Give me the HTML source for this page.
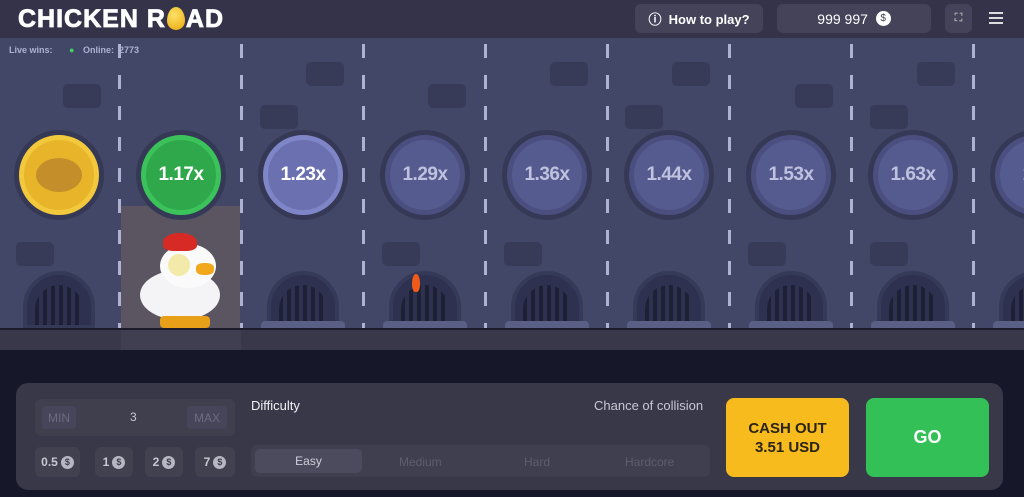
<!DOCTYPE html>
<html><head><meta charset="utf-8"><style>
*{margin:0;padding:0;box-sizing:border-box}
body{width:1024px;height:497px;overflow:hidden;background:#17172a;font-family:"Liberation Sans",sans-serif;position:relative}
.hdr{position:absolute;left:0;top:0;width:1024px;height:38px;background:#353349}
.logo{position:absolute;left:18px;top:5px;color:#fff;font-weight:900;font-size:25px;letter-spacing:1px;-webkit-text-stroke:0.8px #fff}
.egg{display:inline-block;width:18px;height:23px;background:radial-gradient(circle at 40% 35%,#ffe066,#e9a90c);border-radius:50% 50% 50% 50%/60% 60% 40% 40%;vertical-align:-3px;margin:0 1px}
.btn{position:absolute;background:#45435a;border-radius:6px;color:#fff;font-size:13px;font-weight:bold;display:flex;align-items:center;justify-content:center}
.game{position:absolute;left:0;top:38px;width:1024px;height:292px;background:#424767;overflow:hidden}
.div{position:absolute;top:6px;width:3px;height:290px;background:repeating-linear-gradient(#aeb2d2 0 14px,transparent 14px 31px)}
.brick{position:absolute;width:38px;height:24px;border-radius:5px;background:#373b57}
.coin{position:absolute;width:90px;height:90px;border-radius:50%;background:#353955;display:flex;align-items:center;justify-content:center;top:92px}
.coin i{display:flex;width:80px;height:80px;border-radius:50%;background:#555b8f;border:5px solid #4a4f80;align-items:center;justify-content:center;color:#bfc2de;font-style:normal;font-weight:bold;font-size:19px;letter-spacing:-0.5px}
.sewer{position:absolute;top:233px;width:72px;height:58px;border-radius:36px 36px 0 0;background:#2e3250;border:4px solid #353a59}
.sewer:after{content:"";position:absolute;left:8px;right:8px;top:10px;bottom:0;background:repeating-linear-gradient(90deg,#1e2136 0 4px,#2e3250 4px 8px);border-radius:26px 26px 0 0}
.slab{position:absolute;top:283px;width:84px;height:8px;border-radius:4px 4px 0 0;background:#5a5f86}
.road{position:absolute;left:0;top:328px;width:1024px;height:22px;background:#39384a;border-top:2px solid #1c1c2a}
.panel{position:absolute;left:16px;top:383px;width:987px;height:107px;background:#393849;border-radius:12px}
.chip{position:absolute;top:447px;height:30px;background:#42414f;border-radius:6px;color:#c8c7d3;font-size:12px;font-weight:bold;display:flex;align-items:center;justify-content:center;gap:3px}
.s{display:inline-flex;width:13px;height:13px;border-radius:50%;background:#b7b6c2;color:#3d3c4c;font-size:9px;align-items:center;justify-content:center}
</style></head><body>
<div class="hdr">
<div class="logo">CHICKEN R<span class="egg"></span>AD</div>
<div class="btn" style="left:635px;top:4px;width:128px;height:29px">ⓘ&nbsp; How to play?</div>
<div class="btn" style="left:777px;top:4px;width:154px;height:29px;font-weight:normal;font-size:14px">999 997&nbsp;&nbsp;<span class="s" style="width:15px;height:15px;background:#fff;font-size:10px">$</span></div>
<div class="btn" style="left:945px;top:4px;width:27px;height:29px;font-size:11px;color:#aaa">⛶</div>
<div style="position:absolute;left:989px;top:12px;width:14px;height:2px;background:#ddd;box-shadow:0 5px #ddd,0 10px #ddd"></div>
</div>
<div class="game">
<div style="position:absolute;left:9px;top:7px;font-size:9px;font-weight:bold;color:#aeb1d0">Live wins: <span style="color:#3fd160;margin:0 6px 0 14px">●</span> Online: &nbsp;2773</div>
<div class="div" style="left:118px"></div><div class="div" style="left:240px"></div><div class="div" style="left:362px"></div><div class="div" style="left:484px"></div><div class="div" style="left:606px"></div><div class="div" style="left:728px"></div><div class="div" style="left:850px"></div><div class="div" style="left:972px"></div>
<div class="brick" style="left:63px;top:46px"></div><div class="brick" style="left:306px;top:24px"></div><div class="brick" style="left:260px;top:67px"></div><div class="brick" style="left:428px;top:46px"></div><div class="brick" style="left:550px;top:24px"></div><div class="brick" style="left:625px;top:67px"></div><div class="brick" style="left:672px;top:24px"></div><div class="brick" style="left:795px;top:46px"></div><div class="brick" style="left:917px;top:24px"></div><div class="brick" style="left:870px;top:67px"></div>
<div class="brick" style="left:16px;top:204px"></div><div class="brick" style="left:382px;top:204px"></div><div class="brick" style="left:504px;top:204px"></div><div class="brick" style="left:870px;top:204px"></div><div class="brick" style="left:748px;top:204px"></div>
<div style="position:absolute;left:121px;top:168px;width:119px;height:124px;background:#5a5560"></div>
<div class="coin" style="left:14px"><i style="background:#e8b52a;border-color:#f2c93c"><span style="width:46px;height:34px;border-radius:50%;background:#c48f2a;display:block"></span></i></div>
<div class="coin" style="left:136px"><i style="background:#2ea84a;border-color:#3cc25a;color:#fff">1.17x</i></div>
<div class="coin" style="left:258px"><i style="background:#6a70b0;border-color:#7f86c8;color:#fff">1.23x</i></div>
<div class="coin" style="left:380px"><i>1.29x</i></div>
<div class="coin" style="left:502px"><i>1.36x</i></div>
<div class="coin" style="left:624px"><i>1.44x</i></div>
<div class="coin" style="left:746px"><i>1.53x</i></div>
<div class="coin" style="left:868px"><i>1.63x</i></div>
<div class="coin" style="left:990px"><i>1.7</i></div>
<div class="sewer" style="left:23px"></div><div class="sewer" style="left:267px"></div><div class="sewer" style="left:389px"></div><div class="sewer" style="left:511px"></div><div class="sewer" style="left:633px"></div><div class="sewer" style="left:755px"></div><div class="sewer" style="left:877px"></div><div class="sewer" style="left:999px"></div>
<div class="slab" style="left:261px"></div><div class="slab" style="left:383px"></div><div class="slab" style="left:505px"></div><div class="slab" style="left:627px"></div><div class="slab" style="left:749px"></div><div class="slab" style="left:871px"></div><div class="slab" style="left:993px"></div>
<div style="position:absolute;left:412px;top:236px;width:8px;height:18px;background:#f05a1a;border-radius:50% 50% 40% 40%"></div>
<div style="position:absolute;left:140px;top:232px;width:80px;height:50px;border-radius:50%;background:#f4f4f6"></div>
<div style="position:absolute;left:160px;top:206px;width:56px;height:44px;border-radius:50%;background:#fafafa"></div>
<div style="position:absolute;left:163px;top:195px;width:34px;height:18px;border-radius:50% 50% 30% 30%;background:#d82a24"></div>
<div style="position:absolute;left:168px;top:216px;width:22px;height:22px;border-radius:50%;background:#f3e9a8"></div>
<div style="position:absolute;left:196px;top:225px;width:18px;height:12px;border-radius:40%;background:#f1a81c"></div>
<div style="position:absolute;left:160px;top:278px;width:50px;height:12px;background:#e8a018;border-radius:4px"></div>
</div>
<div class="road"><div style="position:absolute;left:121px;width:120px;height:20px;background:#403f52"></div></div>
<div class="panel"></div>
<div style="position:absolute;left:35px;top:399px;width:200px;height:37px;background:#403f4e;border-radius:6px"></div>
<div style="position:absolute;left:42px;top:406px;width:34px;height:23px;background:#46455a;border-radius:4px;color:#6d6b80;font-size:12px;display:flex;align-items:center;justify-content:center">MIN</div>
<div style="position:absolute;left:130px;top:410px;color:#c8c7d3;font-size:12px">3</div>
<div style="position:absolute;left:187px;top:406px;width:40px;height:23px;background:#46455a;border-radius:4px;color:#6d6b80;font-size:12px;display:flex;align-items:center;justify-content:center">MAX</div>
<div class="chip" style="left:35px;width:45px">0.5<span class="s">$</span></div>
<div class="chip" style="left:95px;width:38px">1<span class="s">$</span></div>
<div class="chip" style="left:145px;width:38px">2<span class="s">$</span></div>
<div class="chip" style="left:195px;width:40px">7<span class="s">$</span></div>
<div style="position:absolute;left:251px;top:398px;color:#f0f0f4;font-size:13px">Difficulty</div>
<div style="position:absolute;left:594px;top:398px;color:#c8c7d3;font-size:13px">Chance of collision</div>
<div style="position:absolute;left:251px;top:445px;width:459px;height:32px;background:#403f4f;border-radius:6px;font-size:12px;color:#5e5d70">
<div style="position:absolute;left:4px;top:4px;width:107px;height:24px;background:#4c4b5d;border-radius:5px;color:#d0cfda;display:flex;align-items:center;justify-content:center">Easy</div>
<span style="position:absolute;left:148px;top:10px">Medium</span><span style="position:absolute;left:273px;top:10px">Hard</span><span style="position:absolute;left:374px;top:10px">Hardcore</span></div>
<div style="position:absolute;left:726px;top:398px;width:123px;height:79px;background:#f7bb1d;border-radius:8px;color:#2a2418;font-weight:bold;font-size:15px;display:flex;align-items:center;justify-content:center;text-align:center;line-height:19px">CASH OUT<br>3.51 USD</div>
<div style="position:absolute;left:866px;top:398px;width:123px;height:79px;background:#33c157;border-radius:8px;color:#fff;font-weight:bold;font-size:18px;display:flex;align-items:center;justify-content:center">GO</div>
</body></html>
